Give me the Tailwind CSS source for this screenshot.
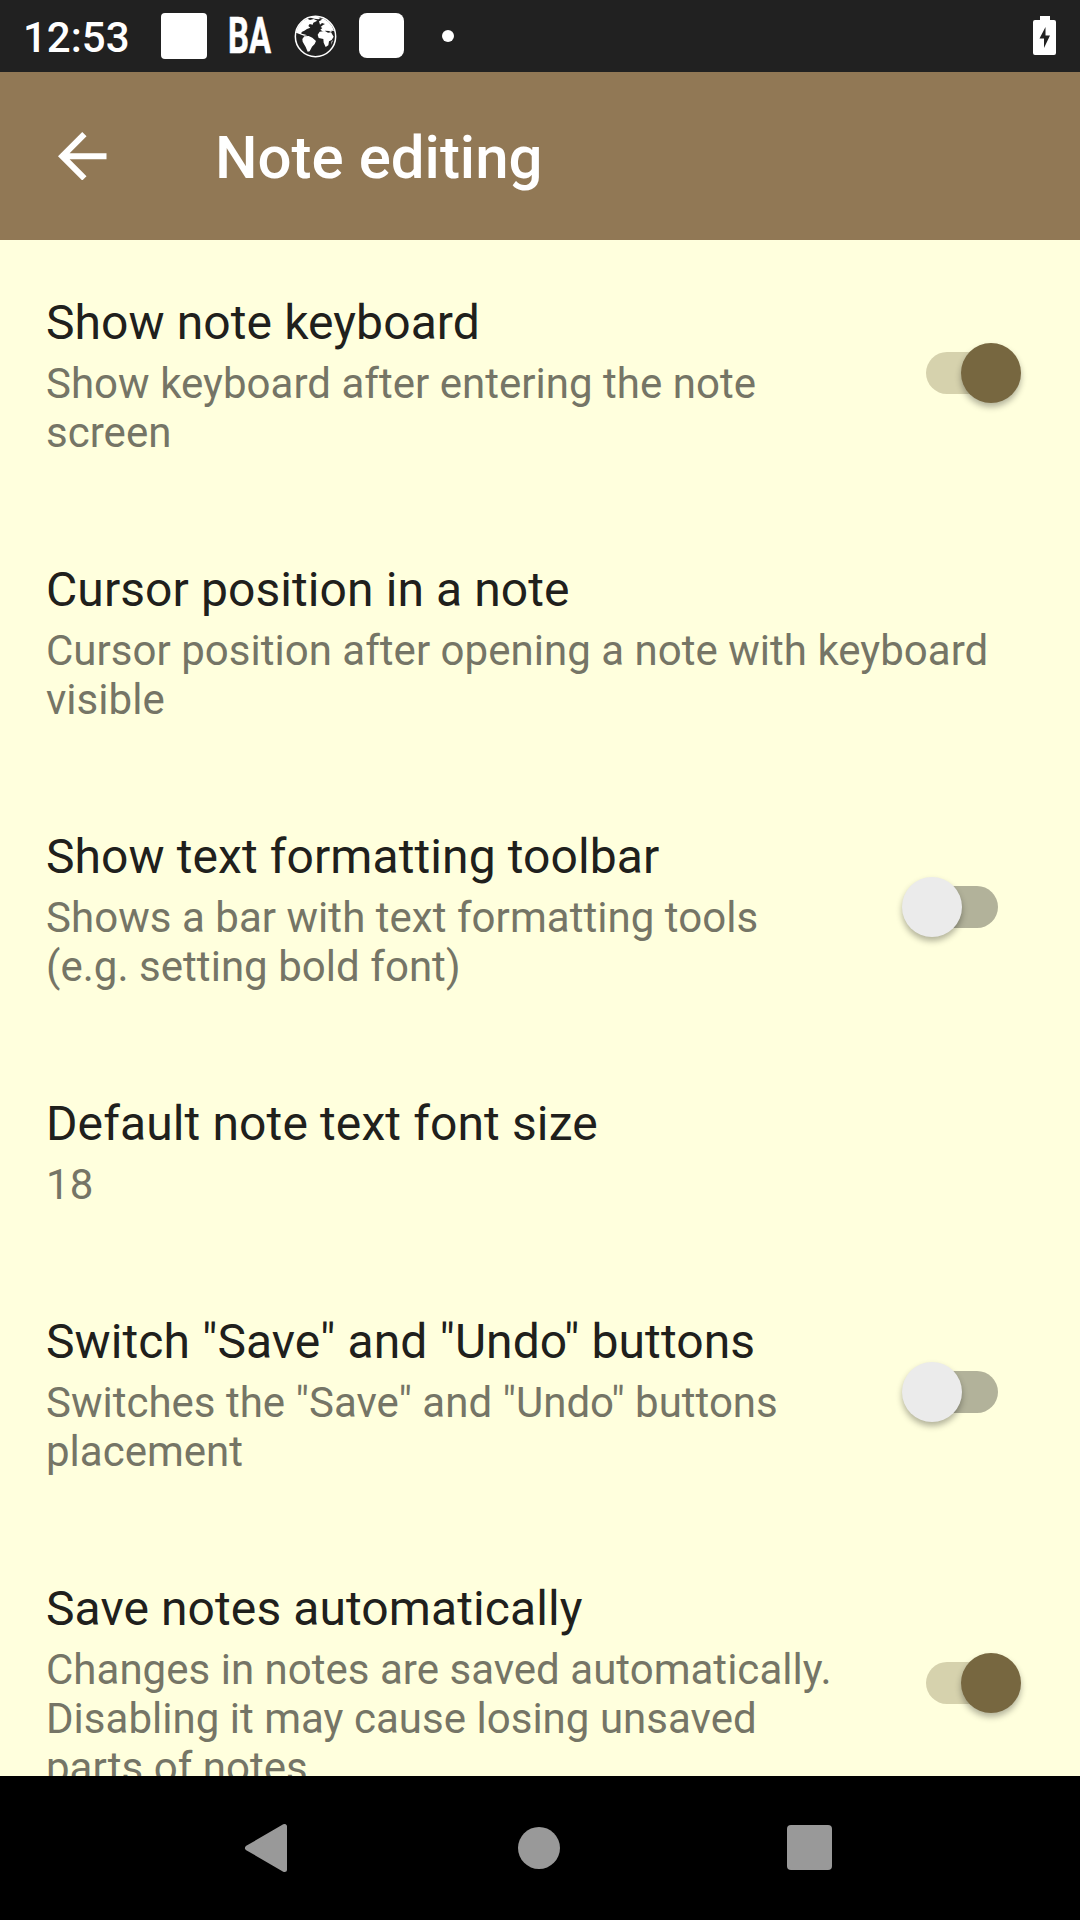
<!DOCTYPE html>
<html lang="en"><head><meta charset="utf-8"><title>Note editing</title><script src="https://cdn.jsdelivr.net/npm/@tailwindcss/browser@4"></script></head>
<body class="w-[1080px] h-[1920px] overflow-hidden bg-[#ffffdd] flex flex-col font-['Roboto',sans-serif]">
<header class="h-[72px] shrink-0 bg-[#212121] text-white flex items-center pl-[23px] pr-[24px]">
  <span class="w-[138px] text-[42px] leading-[68px] font-medium pt-[4px]">12:53</span>
  <span class="size-[45.5px] rounded-[4px] bg-white"></span>
  <svg class="ml-[21px] w-[44px] h-[44px] overflow-visible" viewBox="0 0 44 44"><text x="0" y="39.200" font-family="Roboto" font-weight="700" font-size="49.500" fill="#fff" stroke="#fff" stroke-width="0.600" textLength="43" lengthAdjust="spacingAndGlyphs">BA</text></svg>
  <svg class="ml-[22px] size-[43px]" viewBox="252 43 129 129" fill="#fff">
    <circle cx="316.500" cy="107.500" r="60.500" fill="none" stroke="#fff" stroke-width="4.500"/>
    <path d="M259 92 L266 76 L279 61 L292 54 L300 58 L311 55 L322 60 L310 66 L308 72 L299 70 L295 76 L301 81 L291 85 L283 90 L275 94 L274 99 L282 101 L292 104 L282 105 L270 101 L258 96Z"/>
    <path d="M283 107 L296 106 L307 111 L318 121 L314 130 L306 138 L299 152 L293 153 L287 139 L278 123 L277 115Z"/>
    <path d="M298 50 L316 47 L332 51 L326 56 L313 54Z M327 62 L336 57 L330 54 L341 54 L355 63 L366 76 L372 91 L364 90 L365 95 L357 91 L346 90 L340 93 L331 87 L337 82 L332 79 L339 73 L345 70 L336 67 L330 72Z"/>
    <path d="M329 93 L345 91 L354 96 L363 95 L371 108 L365 118 L357 122 L355 134 L347 139 L341 126 L340 115 L326 112 L323 102Z M365 122 L369 119 L363 133Z"/>
  </svg>
  <span class="ml-[22px] -mt-px size-[45px] rounded-[8px] bg-white"></span>
  <span class="ml-[38px] size-[12px] rounded-full bg-white"></span>
  <svg class="ml-auto w-[23px] h-[39px] -mt-px" viewBox="0 0 23 39"><path d="M7 0h10v4h4q2 0 2 2v31q0 2-2 2H2q-2 0-2-2V6q0-2 2-2h5z" fill="#fff"/><path d="M12.500 11v8.500h4.500L11 32v-9.500H6.500z" fill="#212121"/></svg>
</header>
<div class="h-[168px] shrink-0 bg-[#917855] flex items-center text-white">
  <svg class="ml-[58px] size-[48.500px]" viewBox="4 4 16 16" fill="#fff"><path d="M20 11H7.830l5.590-5.590L12 4l-8 8 8 8 1.410-1.410L7.830 13H20v-2z"/></svg>
  <h1 class="ml-[108.500px] text-[60px] leading-[70px] font-medium pt-[4px]">Note editing</h1>
</div>
<main class="h-[1536px] shrink-0 overflow-hidden pt-[55px] text-[#20201c]">
  <section class="flex pl-[46px] h-[267px]">
    <div class="w-[842px]"><h2 class="text-[48px] leading-[56px] tracking-[0.090px]">Show note keyboard</h2><p class="mt-2 text-[42px] leading-[49px] tracking-[0.025px] text-[#757566]">Show keyboard after entering the note<br>screen</p></div>
    <div class="mt-[48px] ml-[38px] w-[95px] h-[60px] flex items-center"><span class="w-[70px] h-[42px] rounded-full bg-[#d6d2ad]"></span><span class="-ml-[35px] size-[60px] shrink-0 rounded-full bg-[#776740] shadow-[0_4px_6px_rgba(0,0,0,0.3)]"></span></div>
  </section>
  <section class="pl-[46px] h-[267px]"><h2 class="text-[48px] leading-[56px] tracking-[0.090px]">Cursor position in a note</h2><p class="mt-2 text-[42px] leading-[49px] tracking-[0.025px] text-[#757566]">Cursor position after opening a note with keyboard<br>visible</p></section>
  <section class="flex pl-[46px] h-[267px]">
    <div class="w-[842px]"><h2 class="text-[48px] leading-[56px] tracking-[0.090px]">Show text formatting toolbar</h2><p class="mt-2 text-[42px] leading-[49px] tracking-[0.040px] text-[#757566]">Shows a bar with text formatting tools<br>(e.g. setting bold font)</p></div>
    <div class="mt-[48px] ml-[14px] w-[96px] h-[60px] flex items-center"><span class="z-10 size-[60px] shrink-0 rounded-full bg-[#ebebeb] shadow-[0_4px_6px_rgba(0,0,0,0.3)]"></span><span class="-ml-[34px] w-[70px] h-[42px] shrink-0 rounded-full bg-[#b2b29a]"></span></div>
  </section>
  <section class="pl-[46px] h-[218px]"><h2 class="text-[48px] leading-[56px] tracking-[0.120px]">Default note text font size</h2><p class="mt-2 text-[42px] leading-[49px] tracking-[0.025px] text-[#757566]">18</p></section>
  <section class="flex pl-[46px] h-[267px]">
    <div class="w-[842px]"><h2 class="text-[48px] leading-[56px] tracking-[0.080px]">Switch "Save" and "Undo" buttons</h2><p class="mt-2 text-[42px] leading-[49px] text-[#757566]">Switches the "Save" and "Undo" buttons<br>placement</p></div>
    <div class="mt-[48px] ml-[14px] w-[96px] h-[60px] flex items-center"><span class="z-10 size-[60px] shrink-0 rounded-full bg-[#ebebeb] shadow-[0_4px_6px_rgba(0,0,0,0.3)]"></span><span class="-ml-[34px] w-[70px] h-[42px] shrink-0 rounded-full bg-[#b2b29a]"></span></div>
  </section>
  <section class="flex pl-[46px] h-[267px]">
    <div class="w-[842px]"><h2 class="text-[48px] leading-[56px] tracking-[0.090px]">Save notes automatically</h2><p class="mt-2 text-[42px] leading-[49px] tracking-[0.025px] text-[#757566]">Changes in notes are saved automatically.<br>Disabling it may cause losing unsaved<br>parts of notes.</p></div>
    <div class="mt-[72px] ml-[38px] w-[95px] h-[60px] flex items-center"><span class="w-[70px] h-[42px] rounded-full bg-[#d6d2ad]"></span><span class="-ml-[35px] size-[60px] shrink-0 rounded-full bg-[#776740] shadow-[0_4px_6px_rgba(0,0,0,0.3)]"></span></div>
  </section>
</main>
<nav class="h-[144px] shrink-0 bg-black flex items-center pl-[244px]">
  <svg class="w-[44px] h-[50px]" viewBox="0 0 44 50"><path d="M40.500 3.500V46.500L3.500 25Z" fill="#999" stroke="#999" stroke-width="5" stroke-linejoin="round"/></svg>
  <span class="ml-[230px] size-[42px] rounded-full bg-[#999]"></span>
  <span class="ml-[227px] -mt-px size-[45px] rounded-[4px] bg-[#999]"></span>
</nav>
</body></html>
